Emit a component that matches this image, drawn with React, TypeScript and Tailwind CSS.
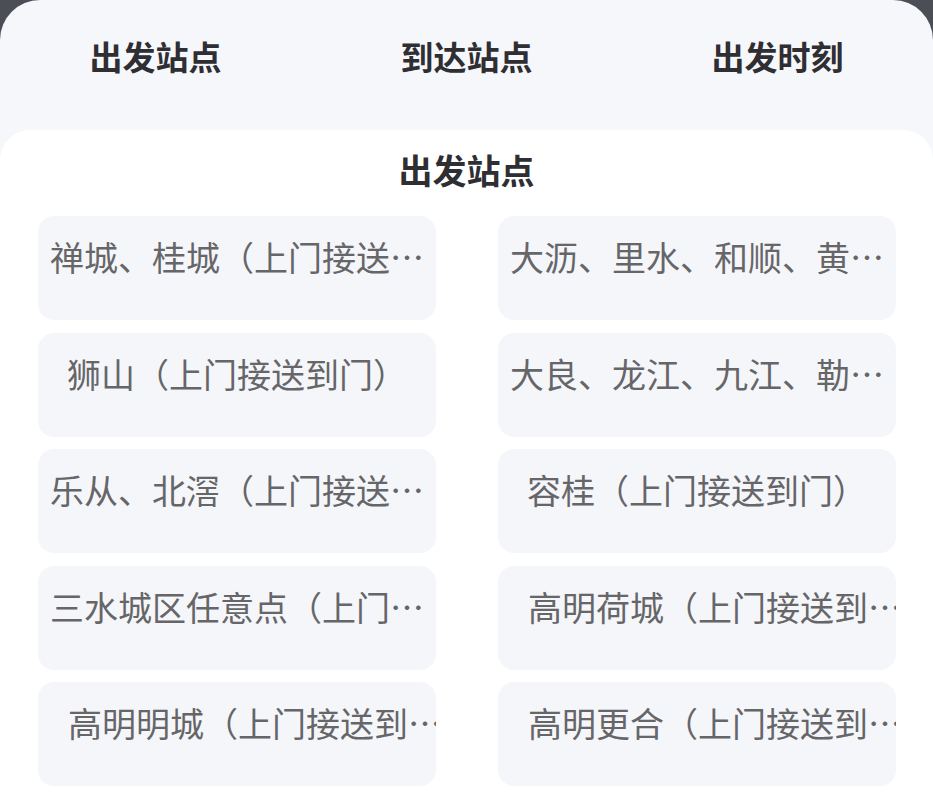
type Station = {
  id: string
  label: string
  align: 'left' | 'center' | 'indent'
}

const tabs = ['出发站点', '到达站点', '出发时刻']

const stations: Station[] = [
  { id: 'chancheng', label: '禅城、桂城（上门接送…', align: 'left' },
  { id: 'dali', label: '大沥、里水、和顺、黄…', align: 'left' },
  { id: 'shishan', label: '狮山（上门接送到门）', align: 'center' },
  { id: 'daliang', label: '大良、龙江、九江、勒…', align: 'left' },
  { id: 'lecong', label: '乐从、北滘（上门接送…', align: 'left' },
  { id: 'ronggui', label: '容桂（上门接送到门）', align: 'center' },
  { id: 'sanshui', label: '三水城区任意点（上门…', align: 'left' },
  { id: 'hecheng', label: '高明荷城（上门接送到…', align: 'indent' },
  { id: 'mingcheng', label: '高明明城（上门接送到…', align: 'indent' },
  { id: 'genghe', label: '高明更合（上门接送到…', align: 'indent' },
]

const alignClass: Record<Station['align'], string> = {
  left: 'pl-3',
  center: 'text-center',
  indent: 'pl-[30px]',
}

export default function App() {
  return (
    <div
      className="h-[795px] w-full overflow-hidden bg-[#4b4e55]"
      style={{ fontFamily: '"Noto Sans CJK SC", "Noto Sans", sans-serif' }}
    >
      <div className="flex h-full flex-col rounded-t-[40px] bg-[#f6f7fb]">
        <nav className="grid h-[130px] shrink-0 grid-cols-3 pt-[36px]">
          {tabs.map((tab) => (
            <button
              className="h-[40px] text-center text-[33px] font-bold leading-[40px] text-[#2e2e33]"
              key={tab}
              type="button"
            >
              {tab}
            </button>
          ))}
        </nav>

        <section className="flex-1 rounded-t-[30px] bg-white pt-[20px]">
          <h2 className="text-center text-[34px] font-bold leading-[40px] text-[#2e2e33]">出发站点</h2>

          <div className="mt-[26px] grid grid-cols-2 gap-x-[62px] gap-y-[12.5px] pl-[38px] pr-[37px]">
            {stations.map((station) => (
              <div
                className="h-[104px] overflow-hidden rounded-[16px] bg-[#f5f6fa] pt-[21px]"
                key={station.id}
              >
                <p
                  className={`whitespace-nowrap text-[34px] leading-[40px] text-[#666669] ${alignClass[station.align]}`}
                >
                  {station.label}
                </p>
              </div>
            ))}
          </div>
        </section>
      </div>
    </div>
  )
}
